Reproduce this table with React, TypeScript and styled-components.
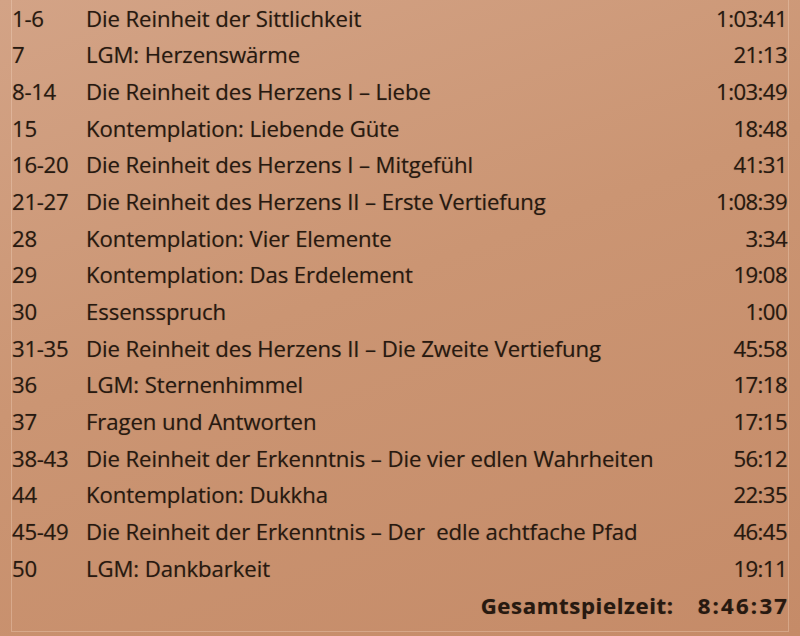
import React from "react";
import styled, { createGlobalStyle } from "styled-components";

const Global = createGlobalStyle`
  html, body { margin: 0; padding: 0; }
  body {
    width: 800px;
    height: 636px;
    overflow: hidden;
    background: linear-gradient(160deg, #d3a386 0%, #cb9573 45%, #c58b68 100%);
  }
`;

const Frame = styled.div`
  box-sizing: border-box;
  margin: -12px 11px 0 11px;
  height: 644px;
  border: 1px solid rgba(255, 235, 215, 0.28);
  padding: 10.7px 1px 0 0;
  font-family: "Open Sans", "Noto Sans", sans-serif;
  font-size: 22.2px;
  color: #271910;
  text-shadow: 0 0 1px rgba(42, 28, 19, 0.4);
`;

const Row = styled.div`
  display: grid;
  grid-template-columns: 74px 1fr auto;
  align-items: center;
  height: 36.7px;
  white-space: pre;
`;

const Num = styled.span`
  letter-spacing: -0.3px;
`;
const Title = styled.span`
  letter-spacing: -0.1px;
`;
const Time = styled.span`
  text-align: right;
  letter-spacing: -0.6px;
`;

const TotalRow = styled.div`
  display: flex;
  justify-content: flex-end;
  align-items: center;
  gap: 24px;
  height: 36.7px;
  font-weight: 700;
`;

const TotalLabel = styled.span`
  letter-spacing: 0.6px;
`;
const TotalValue = styled.span`
  letter-spacing: 2.2px;
  margin-right: -2.2px;
`;

const tracks: [string, string, string][] = [
  ["1-6", "Die Reinheit der Sittlichkeit", "1:03:41"],
  ["7", "LGM: Herzenswärme", "21:13"],
  ["8-14", "Die Reinheit des Herzens I – Liebe", "1:03:49"],
  ["15", "Kontemplation: Liebende Güte", "18:48"],
  ["16-20", "Die Reinheit des Herzens I – Mitgefühl", "41:31"],
  ["21-27", "Die Reinheit des Herzens II – Erste Vertiefung", "1:08:39"],
  ["28", "Kontemplation: Vier Elemente", "3:34"],
  ["29", "Kontemplation: Das Erdelement", "19:08"],
  ["30", "Essensspruch", "1:00"],
  ["31-35", "Die Reinheit des Herzens II – Die Zweite Vertiefung", "45:58"],
  ["36", "LGM: Sternenhimmel", "17:18"],
  ["37", "Fragen und Antworten", "17:15"],
  ["38-43", "Die Reinheit der Erkenntnis – Die vier edlen Wahrheiten", "56:12"],
  ["44", "Kontemplation: Dukkha", "22:35"],
  ["45-49", "Die Reinheit der Erkenntnis – Der  edle achtfache Pfad", "46:45"],
  ["50", "LGM: Dankbarkeit", "19:11"],
];

export default function App() {
  return (
    <>
      <Global />
      <Frame>
        {tracks.map(([n, t, d]) => (
          <Row key={n}>
            <Num>{n}</Num>
            <Title>{t}</Title>
            <Time>{d}</Time>
          </Row>
        ))}
        <TotalRow>
          <TotalLabel>Gesamtspielzeit:</TotalLabel>
          <TotalValue>8:46:37</TotalValue>
        </TotalRow>
      </Frame>
    </>
  );
}
